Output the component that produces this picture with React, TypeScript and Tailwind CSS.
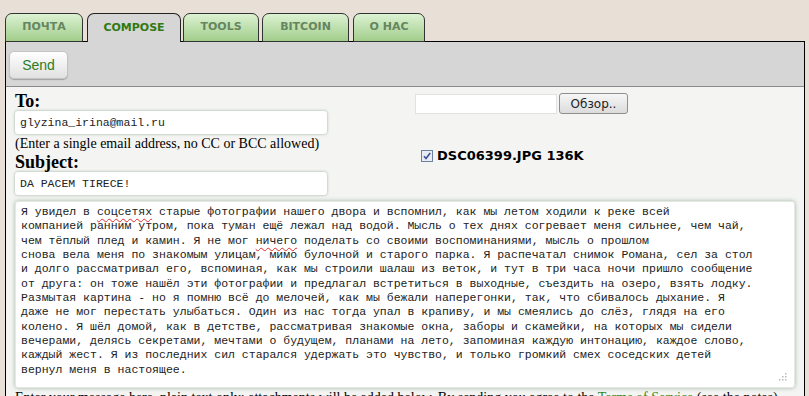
import React from "react";

const tabs = [
    { label: "ПОЧТА", w: "w-[78px]", ml: "ml-0" },
    { label: "COMPOSE", w: "w-[94px]", ml: "ml-[4px]", active: true },
    { label: "TOOLS", w: "w-[76px]", ml: "ml-[2px]" },
    { label: "BITCOIN", w: "w-[87px]", ml: "ml-[3px]" },
    { label: "О НАС", w: "w-[72px]", ml: "ml-[4px]" },
];

// body of the message, one entry per wrapped line
const lines: React.ReactNode[] = [
    <>
        Я увидел в <Typo>соцсетях</Typo> старые фотографии нашего двора и вспомнил, как мы летом ходили к реке всей
    </>,
    "компанией ранним утром, пока туман ещё лежал над водой. Мысль о тех днях согревает меня сильнее, чем чай,",
    <>
        чем тёплый плед и камин. Я не мог <Typo>ничего</Typo> поделать со своими воспоминаниями, мысль о прошлом
    </>,
    "снова вела меня по знакомым улицам, мимо булочной и старого парка. Я распечатал снимок Романа, сел за стол",
    "и долго рассматривал его, вспоминая, как мы строили шалаш из веток, и тут в три часа ночи пришло сообщение",
    "от друга: он тоже нашёл эти фотографии и предлагал встретиться в выходные, съездить на озеро, взять лодку.",
    "Размытая картина - но я помню всё до мелочей, как мы бежали наперегонки, так, что сбивалось дыхание. Я",
    "даже не мог перестать улыбаться. Один из нас тогда упал в крапиву, и мы смеялись до слёз, глядя на его",
    "колено. Я шёл домой, как в детстве, рассматривая знакомые окна, заборы и скамейки, на которых мы сидели",
    "вечерами, делясь секретами, мечтами о будущем, планами на лето, запоминая каждую интонацию, каждое слово,",
    "каждый жест. Я из последних сил старался удержать это чувство, и только громкий смех соседских детей",
    "вернул меня в настоящее.",
];

function Typo({ children }: { children: React.ReactNode }) {
    return (
        <span className="underline decoration-wavy decoration-[#e02a2a] decoration-1 underline-offset-[3px]">
            {children}
        </span>
    );
}

function Tab({ label, w, ml, active }: { label: string; w: string; ml: string; active?: boolean }) {
    if (active) {
        return (
            <div
                className={`${w} ${ml} relative z-10 h-[29px] rounded-t-[7px] border border-b-0 border-[#222] bg-[#d6d6d6] flex items-center justify-center text-[11px] font-bold text-[#2f7a12] font-['DejaVu_Sans',sans-serif]`}
            >
                {label}
            </div>
        );
    }
    return (
        <div
            className={`${w} ${ml} h-[29px] rounded-t-[7px] border border-[#333] bg-gradient-to-b from-[#dcf2d2] to-[#a2cd8b] flex items-center justify-center text-[11px] font-bold text-[#658660] font-['DejaVu_Sans',sans-serif]`}
        >
            {label}
        </div>
    );
}

function ResizeGrip() {
    return (
        <svg width="10" height="10" viewBox="0 0 10 10" className="absolute right-[6px] bottom-[5px]">
            {[
                [8, 2],
                [5, 5],
                [8, 5],
                [2, 8],
                [5, 8],
                [8, 8],
            ].map(([x, y], i) => (
                <rect key={i} x={x - 1} y={y - 1} width="1.5" height="1.5" fill="#b9b9b9" />
            ))}
        </svg>
    );
}

export default function App() {
    return (
        <div className="min-h-screen bg-[#e8e0d6] pt-[13px] pl-[5px] overflow-hidden">
            {/* Tabs */}
            <div className="flex items-end -mb-px">
                {tabs.map((t) => (
                    <Tab key={t.label} {...t} />
                ))}
            </div>

            {/* Panel */}
            <div className="w-[800px] border border-black bg-[#f4f5f3]">
                <div className="h-[45px] bg-[#d6d6d6] border-b border-[#8a8a8a] pl-[3px] pt-[9px]">
                    <button className="w-[59px] h-[28px] rounded-[5px] border border-[#c4c4c4] bg-gradient-to-b from-[#ffffff] to-[#e1e1e1] shadow-[0_1px_1px_rgba(0,0,0,0.25)] text-[14px] text-[#2c7d1c] font-['Liberation_Sans',Arial,sans-serif]">
                        Send
                    </button>
                </div>

                <div className="pl-[9px] pt-[4px]">
                    <div className="flex">
                        {/* Left column */}
                        <div className="w-[400px]">
                            <div className="text-[18px] leading-[20px] font-bold text-black font-['Liberation_Serif',serif]">To:</div>
                            <div className="w-[312px] h-[23px] rounded-[3px] bg-white shadow-[0_0_3px_rgba(110,140,110,0.7)] pl-[5px] flex items-center text-[11.5px] text-[#222] font-['Liberation_Mono',monospace]">
                                glyzina_irina@mail.ru
                            </div>
                            <div className="mt-[1px] text-[14px] leading-[18px] text-black font-['Liberation_Serif',serif]">
                                (Enter a single email address, no CC or BCC allowed)
                            </div>
                            <div className="text-[18px] leading-[18px] font-bold text-black font-['Liberation_Serif',serif]">Subject:</div>
                            <div className="mt-[1px] w-[312px] h-[23px] rounded-[3px] bg-white shadow-[0_0_3px_rgba(110,140,110,0.7)] pl-[5px] flex items-center text-[11.5px] text-[#222] font-['Liberation_Mono',monospace]">
                                DA PACEM TIRECE!
                            </div>
                        </div>

                        {/* Right column */}
                        <div className="pt-[2px]">
                            <div className="flex items-center">
                                <div className="w-[142px] h-[20px] bg-white border border-[#e2e2e2]" />
                                <button className="ml-[2px] w-[69px] h-[21px] rounded-[3px] border border-[#8f8f8f] bg-gradient-to-b from-[#f6f6f6] to-[#dcdcdc] text-[12px] text-[#222] font-['DejaVu_Sans',sans-serif]">
                                    Обзор..
                                </button>
                            </div>
                            <div className="mt-[32px] ml-[6px] flex items-center gap-[4px]">
                                <svg width="12" height="12" viewBox="0 0 12 12">
                                    <rect x="0.5" y="0.5" width="11" height="11" fill="#e8ecf3" stroke="#6d7fa3" />
                                    <path d="M3 6.2 L5 8.5 L9.2 3" fill="none" stroke="#3d4f9a" strokeWidth="1.6" />
                                </svg>
                                <span className="text-[13px] font-bold text-black font-['DejaVu_Sans',sans-serif]">DSC06399.JPG 136K</span>
                            </div>
                        </div>
                    </div>

                    {/* Message body */}
                    <div className="relative mt-[6px] w-[780px] h-[187px] rounded-[3px] bg-white border border-[#e4e8e4] shadow-[0_0_4px_rgba(110,140,110,0.6)] pl-[5px] pt-[3px] text-[11.5px] leading-[14.35px] text-[#222] font-['Liberation_Mono',monospace] whitespace-pre overflow-hidden">
                        {lines.map((l, i) => (
                            <div key={i}>{l}</div>
                        ))}
                        <ResizeGrip />
                    </div>

                    <div className="mt-[2px] text-[14px] leading-[16px] text-black font-['Liberation_Serif',serif] whitespace-nowrap">
                        Enter your message here, plain text only; attachments will be added below. By sending you agree to the{" "}
                        <span className="text-[#2f8a1a]">Terms of Service</span> (see the notes)
                    </div>
                </div>
            </div>
        </div>
    );
}
